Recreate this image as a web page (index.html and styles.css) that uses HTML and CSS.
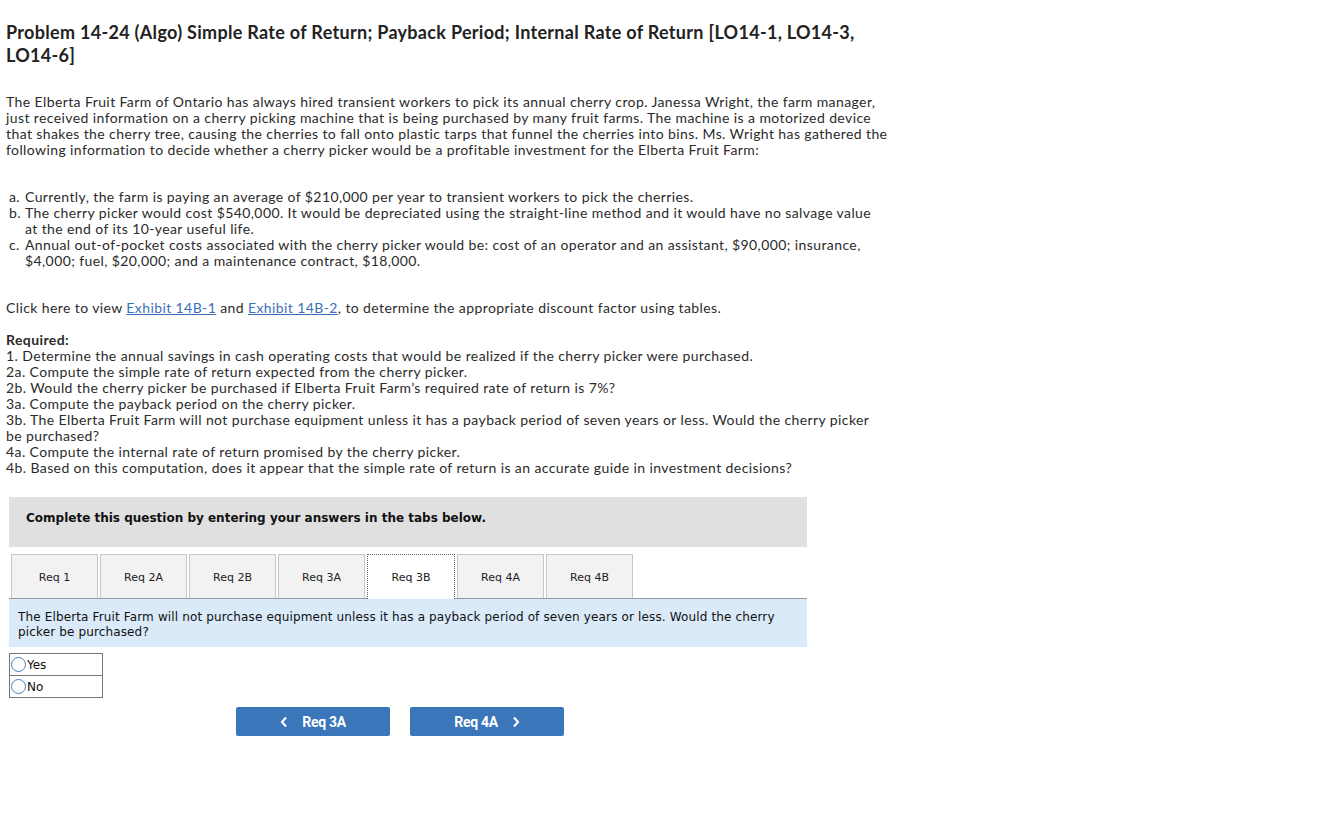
FILE: index.html
```html
<!DOCTYPE html>
<html>
<head>
<meta charset="utf-8">
<link rel="stylesheet" href="styles.css">
</head>
<body>
<div class="page">
  <h1 class="title">Problem 14-24 (Algo) Simple Rate of Return; Payback Period; Internal Rate of Return [LO14-1, LO14-3,<br>LO14-6]</h1>

  <p class="intro">The Elberta Fruit Farm of Ontario has always hired transient workers to pick its annual cherry crop. Janessa Wright, the farm manager,<br>just received information on a cherry picking machine that is being purchased by many fruit farms. The machine is a motorized device<br>that shakes the cherry tree, causing the cherries to fall onto plastic tarps that funnel the cherries into bins. Ms. Wright has gathered the<br>following information to decide whether a cherry picker would be a profitable investment for the Elberta Fruit Farm:</p>

  <ul class="facts">
    <li><span class="mark">a.</span><span>Currently, the farm is paying an average of $210,000 per year to transient workers to pick the cherries.</span></li>
    <li><span class="mark">b.</span><span>The cherry picker would cost $540,000. It would be depreciated using the straight-line method and it would have no salvage value<br>at the end of its 10-year useful life.</span></li>
    <li><span class="mark">c.</span><span>Annual out-of-pocket costs associated with the cherry picker would be: cost of an operator and an assistant, $90,000; insurance,<br>$4,000; fuel, $20,000; and a maintenance contract, $18,000.</span></li>
  </ul>

  <p class="exhibit">Click here to view <a href="#" class="link">Exhibit 14B-1</a> and <a href="#" class="link">Exhibit 14B-2</a>, to determine the appropriate discount factor using tables.</p>

  <div class="required">
    <div class="req-head">Required:</div>
    <div>1. Determine the annual savings in cash operating costs that would be realized if the cherry picker were purchased.</div>
    <div>2a. Compute the simple rate of return expected from the cherry picker.</div>
    <div>2b. Would the cherry picker be purchased if Elberta Fruit Farm’s required rate of return is 7%?</div>
    <div>3a. Compute the payback period on the cherry picker.</div>
    <div>3b. The Elberta Fruit Farm will not purchase equipment unless it has a payback period of seven years or less. Would the cherry picker<br>be purchased?</div>
    <div>4a. Compute the internal rate of return promised by the cherry picker.</div>
    <div>4b. Based on this computation, does it appear that the simple rate of return is an accurate guide in investment decisions?</div>
  </div>

  <div class="question">
    <div class="banner">Complete this question by entering your answers in the tabs below.</div>
    <div class="tabs">
      <div class="tab">Req 1</div>
      <div class="tab">Req 2A</div>
      <div class="tab">Req 2B</div>
      <div class="tab">Req 3A</div>
      <div class="tab active">Req 3B</div>
      <div class="tab">Req 4A</div>
      <div class="tab">Req 4B</div>
    </div>
    <div class="prompt">The Elberta Fruit Farm will not purchase equipment unless it has a payback period of seven years or less. Would the cherry<br>picker be purchased?</div>
    <div class="choices">
      <label class="choice"><span class="radio"></span>Yes</label>
      <label class="choice"><span class="radio"></span>No</label>
    </div>
    <div class="nav">
      <button class="navbtn"><svg class="chev" width="8" height="12" viewBox="0 0 8 12"><path d="M6 1.5 L2 6 L6 10.5" fill="none" stroke="#fff" stroke-width="2.2"/></svg>Req 3A</button>
      <button class="navbtn">Req 4A<svg class="chev right" width="8" height="12" viewBox="0 0 8 12"><path d="M2 1.5 L6 6 L2 10.5" fill="none" stroke="#fff" stroke-width="2.2"/></svg></button>
    </div>
  </div>
</div>
</body>
</html>
```

FILE: styles.css
```css
html, body {
  margin: 0;
  padding: 0;
  background: #fff;
}

.page {
  padding: 21px 0 0 6px;
  font-family: Lato, "Liberation Sans", sans-serif;
  color: #2b2b2b;
  font-size: 14px;
  line-height: 16px;
  letter-spacing: 0.4px;
}

.title {
  margin: 0;
  font-size: 18px;
  line-height: 23px;
  font-weight: 700;
  color: #222;
  letter-spacing: 0.3px;
  white-space: nowrap;
}

.intro {
  margin: 27px 0 0 0;
  white-space: nowrap;
}

.facts {
  list-style: none;
  margin: 31px 0 0 0;
  padding: 0 0 0 3px;
  white-space: nowrap;
}

.facts li {
  display: flex;
}

.facts .mark {
  width: 16px;
  flex: none;
}

.exhibit {
  margin: 31px 0 0 0;
  white-space: nowrap;
}

.link {
  color: #3b70b8;
  text-decoration: underline;
}

.required {
  margin-top: 16px;
  white-space: nowrap;
}

.req-head {
  font-weight: 700;
}

.question {
  margin-top: 21px;
  margin-left: 3px;
  width: 798px;
  font-family: "DejaVu Sans", Verdana, sans-serif;
  font-size: 12px;
  letter-spacing: 0;
  color: #111;
}

.banner {
  background: #e0e0e0;
  height: 50px;
  box-sizing: border-box;
  padding: 13px 0 0 17px;
  font-weight: 700;
  line-height: 16px;
}

.tabs {
  display: flex;
  gap: 2px;
  margin-top: 7px;
  padding-left: 2px;
  border-bottom: 1px solid #999;
}

.tab {
  width: 87px;
  height: 44px;
  box-sizing: border-box;
  padding-top: 3px;
  background: #f2f2f2;
  border: 1px solid #c8c8c8;
  border-bottom: none;
  display: flex;
  align-items: center;
  justify-content: center;
  font-size: 11px;
  color: #222;
}

.tab.active {
  background: #fff;
  border: 1px dotted #55657a;
  border-bottom: none;
  margin-bottom: -1px;
  height: 45px;
  width: 88px;
  padding-bottom: 1px;
}

.prompt {
  background: #daeaf8;
  height: 48px;
  box-sizing: border-box;
  padding: 11px 0 0 9px;
  line-height: 15px;
  letter-spacing: 0.14px;
  white-space: nowrap;
}

.choices {
  margin-top: 6px;
  width: 94px;
  border: 1px solid #777;
  box-sizing: border-box;
}

.choice {
  display: flex;
  align-items: center;
  height: 21px;
  font-size: 12px;
  color: #111;
}

.choice + .choice {
  border-top: 1px solid #777;
}

.radio {
  width: 15px;
  height: 15px;
  border: 1.5px solid #4a7fc2;
  border-radius: 50%;
  margin: 0 1px 0 1px;
  box-sizing: border-box;
  background: #fff;
}

.nav {
  display: flex;
  gap: 20px;
  margin-top: 9px;
  padding-left: 227px;
}

.navbtn {
  width: 154px;
  height: 29px;
  border: none;
  border-radius: 2px;
  background: #3a76b9;
  color: #fff;
  font-family: Roboto, "Liberation Sans", sans-serif;
  font-weight: 700;
  font-size: 14px;
  letter-spacing: -0.3px;
  display: flex;
  align-items: center;
  justify-content: center;
  padding: 0;
}

.chev {
  margin-right: 14px;
}

.chev.right {
  margin-right: 0;
  margin-left: 14px;
}
```
